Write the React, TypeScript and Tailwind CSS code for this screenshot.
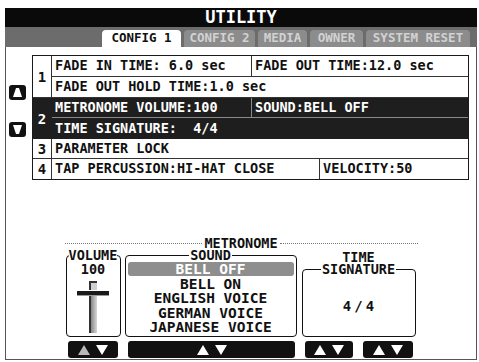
const tabs = [
  { label: 'CONFIG 1', w: 'w-[79px]', active: true },
  { label: 'CONFIG 2', w: 'w-[71px]', active: false },
  { label: 'MEDIA', w: 'w-[49px]', active: false },
  { label: 'OWNER', w: 'w-[53px]', active: false },
  { label: 'SYSTEM RESET', w: 'w-[104px]', active: false },
];

const sounds = ['BELL OFF', 'BELL ON', 'ENGLISH VOICE', 'GERMAN VOICE', 'JAPANESE VOICE'];

function Tri({ up, color = '#fff' }: { up: boolean; color?: string }) {
  return (
    <svg width="12" height="10" viewBox="0 0 12 10">
      <path d={up ? 'M6 0 L12 10 L0 10 Z' : 'M0 0 L12 0 L6 10 Z'} fill={color} />
    </svg>
  );
}

function ScrollIcon({ up }: { up: boolean }) {
  return (
    <svg width="17" height="15" viewBox="0 0 17 15">
      <rect x="0" y="0" width="17" height="15" rx="3" fill="#111" />
      <path
        d={up ? 'M7 3 H10 L13 12 H4 Z' : 'M4 3 H13 L10 12 H7 Z'}
        fill="#fff"
      />
    </svg>
  );
}

function Fader() {
  return (
    <svg width="52" height="54" viewBox="0 0 52 54">
      <defs>
        <linearGradient id="trk" x1="0" x2="1" y1="0" y2="0">
          <stop offset="0" stopColor="#6a6a6a" />
          <stop offset="1" stopColor="#d8d8d8" />
        </linearGradient>
      </defs>
      {/* top cap */}
      <rect x="22" y="2" width="8" height="9" fill="#d0d0d0" />
      <rect x="22" y="2" width="2" height="9" fill="#333" />
      <rect x="22" y="2" width="8" height="2" fill="#333" />
      {/* knob */}
      <rect x="10" y="12" width="32" height="4" fill="#1a1a1a" />
      <rect x="10" y="16" width="32" height="1" fill="#999" />
      {/* track */}
      <rect x="22" y="17" width="8" height="37" fill="url(#trk)" />
      <rect x="22" y="17" width="2" height="37" fill="#333" />
    </svg>
  );
}

function ArrowButton({ w, ml, upColor = '#fff' }: { w: string; ml: string; upColor?: string }) {
  return (
    <div className={`${w} ${ml} h-[17px] bg-[#111] rounded-[3px] flex items-center justify-center gap-[6px]`}>
      <Tri up color={upColor} />
      <Tri up={false} />
    </div>
  );
}

export default function App() {
  return (
    <div className="w-[479px] h-[362px] bg-white overflow-hidden pt-[8px] pl-[5px] font-['DejaVu_Sans_Mono',monospace] font-bold text-[#111]">
      <div className="w-[472px] h-[352px] flex flex-col">
        {/* Title */}
        <div className="h-[19px] bg-[#0a0a0a] flex items-center justify-center text-white text-[17px] leading-none">
          UTILITY
        </div>

        {/* Tabs */}
        <div className="h-[20px] bg-[#6c6c6c] flex items-end pl-[97px] gap-[3px]">
          {tabs.map((t) => (
            <div
              key={t.label}
              className={`${t.w} h-[17px] rounded-t-[4px] flex items-center justify-center text-[12.5px] leading-none whitespace-pre ${
                t.active ? 'bg-white text-[#111]' : 'bg-[#8c8c8c] text-[#d2d2d2]'
              }`}
            >
              {t.label}
            </div>
          ))}
        </div>

        {/* Content */}
        <div className="flex-1 border-x border-b border-[#555] flex flex-col">
          <div className="flex pt-[8px] pr-[7px]">
            <div className="w-[26px] flex flex-col pl-[3px] pt-[30px] gap-[22px]">
              <ScrollIcon up />
              <ScrollIcon up={false} />
            </div>

            <div className="flex-1 border-[1.5px] border-[#1a1a1a] text-[13.5px] leading-none whitespace-pre">
              {/* 1 */}
              <div className="flex border-b border-[#333]">
                <div className="w-[19px] border-r border-[#333] flex items-center justify-center text-[14px]">1</div>
                <div className="flex-1 flex flex-col">
                  <div className="h-[21px] flex border-b border-[#333]">
                    <div className="w-[200px] border-r border-[#333] pl-[3px] flex items-center">FADE IN TIME: 6.0 sec</div>
                    <div className="flex-1 pl-[3px] flex items-center">FADE OUT TIME:12.0 sec</div>
                  </div>
                  <div className="h-[20px] pl-[3px] flex items-center">FADE OUT HOLD TIME:1.0 sec</div>
                </div>
              </div>

              {/* 2 */}
              <div className="flex bg-[#1e1e1e] text-white">
                <div className="w-[19px] border-r border-[#1e1e1e] flex items-center justify-center text-[14px]">2</div>
                <div className="flex-1 flex flex-col">
                  <div className="h-[20px] flex border-b border-[#8a8a8a]">
                    <div className="w-[200px] border-r border-[#8a8a8a] pl-[3px] flex items-center">METRONOME VOLUME:100</div>
                    <div className="flex-1 pl-[3px] flex items-center">SOUND:BELL OFF</div>
                  </div>
                  <div className="h-[21px] pl-[3px] flex items-center">TIME SIGNATURE:  4/4</div>
                </div>
              </div>

              {/* 3 */}
              <div className="flex h-[20px] border-b border-[#333]">
                <div className="w-[19px] border-r border-[#333] flex items-center justify-center text-[14px]">3</div>
                <div className="flex-1 pl-[3px] flex items-center">PARAMETER LOCK</div>
              </div>

              {/* 4 */}
              <div className="flex h-[20px]">
                <div className="w-[19px] border-r border-[#333] flex items-center justify-center text-[14px]">4</div>
                <div className="w-[268px] border-r border-[#333] pl-[3px] flex items-center">TAP PERCUSSION:HI-HAT CLOSE</div>
                <div className="flex-1 pl-[3px] flex items-center">VELOCITY:50</div>
              </div>
            </div>
          </div>

          <div className="flex-1" />

          {/* Metronome */}
          <div className="w-[353px] mx-auto pb-[1px] flex flex-col text-[13.5px] leading-[12px]">
            <div className="h-[12px] flex items-center gap-[2px]">
              <div className="flex-1 border-t border-dotted border-[#777]" />
              <span className="leading-[12px]">METRONOME</span>
              <div className="flex-1 border-t border-dotted border-[#777]" />
            </div>

            <div className="h-[88px] flex items-stretch">
              <fieldset className="ml-[1px] w-[55px] border-[1.5px] border-[#111] rounded-[4px] flex flex-col items-center">
                <legend className="mx-auto px-0 leading-[12px] text-[13.5px]">VOLUME</legend>
                <div className="leading-[14px] mt-[1px]">100</div>
                <div className="mt-[3px]">
                  <Fader />
                </div>
              </fieldset>

              <fieldset className="ml-[4px] w-[172px] border-[1.5px] border-[#111] rounded-[4px] px-[2px] flex flex-col items-stretch text-[14.5px]">
                <legend className="mx-auto px-[1px] leading-[12px] text-[13.5px]">SOUND</legend>
                {sounds.map((s, i) => (
                  <div
                    key={s}
                    className={`flex items-center justify-center leading-[14px] ${
                      i === 0 ? 'bg-[#8e8e8e] text-white rounded-[3px] h-[14px] mt-[1px] mb-[0.5px]' : 'h-[14.5px]'
                    }`}
                  >
                    {s}
                  </div>
                ))}
              </fieldset>

              <div className="ml-[5px] w-[114px] flex flex-col items-stretch">
                <div className="h-[12px] flex items-center justify-center mt-[2px]">TIME</div>
                <fieldset className="flex-1 border-[1.5px] border-[#111] rounded-[4px] flex items-center justify-center">
                  <legend className="mx-auto px-[1px] leading-[12px] text-[13.5px]">SIGNATURE</legend>
                  <span className="tracking-[3px] text-[14px] leading-[14px] pl-[3px]">4/4</span>
                </fieldset>
              </div>
            </div>

            <div className="mt-[4px] flex">
              <ArrowButton w="w-[50px]" ml="ml-[3.5px]" upColor="#b8b8b8" />
              <ArrowButton w="w-[167px]" ml="ml-[10px]" />
              <ArrowButton w="w-[48px]" ml="ml-[10px]" />
              <ArrowButton w="w-[50px]" ml="ml-[10px]" />
            </div>
          </div>
        </div>
      </div>
    </div>
  );
}
